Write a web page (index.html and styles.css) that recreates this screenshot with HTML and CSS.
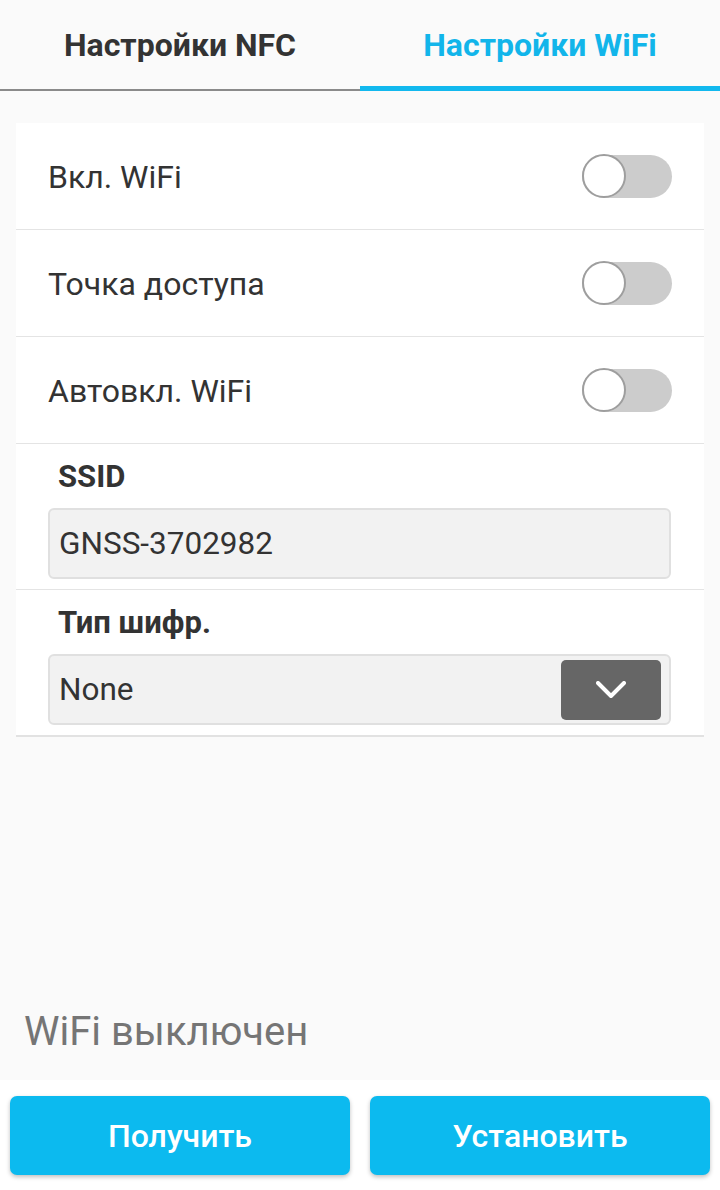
FILE: index.html
```html
<!DOCTYPE html>
<html lang="ru">
<head>
<meta charset="utf-8">
<link rel="stylesheet" href="styles.css">
</head>
<body>
<div class="app">
  <div class="tabs">
    <div class="tab">Настройки NFC</div>
    <div class="tab active">Настройки WiFi</div>
  </div>
  <div class="card">
    <div class="row">
      <span class="label">Вкл. WiFi</span>
      <span class="switch"><span class="knob"></span></span>
    </div>
    <div class="row">
      <span class="label">Точка доступа</span>
      <span class="switch"><span class="knob"></span></span>
    </div>
    <div class="row">
      <span class="label">Автовкл. WiFi</span>
      <span class="switch"><span class="knob"></span></span>
    </div>
    <div class="field">
      <div class="field-label">SSID</div>
      <div class="input">GNSS-3702982</div>
    </div>
    <div class="field">
      <div class="field-label">Тип шифр.</div>
      <div class="input select">
        <span>None</span>
        <span class="drop">
          <svg width="30" height="18" viewBox="0 0 30 18"><path d="M2 2 L15 15 L28 2" fill="none" stroke="#fff" stroke-width="4" stroke-linecap="round" stroke-linejoin="round"/></svg>
        </span>
      </div>
    </div>
  </div>
  <div class="spacer"></div>
  <div class="status">WiFi выключен</div>
  <div class="actions">
    <button class="btn">Получить</button>
    <button class="btn">Установить</button>
  </div>
</div>
</body>
</html>
```
FILE: styles.css
```css
html, body {
  margin: 0;
  padding: 0;
}
body {
  background: #fafafa;
  font-family: Roboto, "Noto Sans", sans-serif;
  color: #333;
}
.app {
  width: 720px;
  height: 1190px;
  display: flex;
  flex-direction: column;
}
.tabs {
  display: flex;
  height: 91px;
}
.tab {
  flex: 1;
  box-sizing: border-box;
  display: flex;
  align-items: center;
  justify-content: center;
  font-size: 32px;
  font-weight: 700;
  color: #333;
  border-bottom: 2px solid #8a8a8a;
}
.tab.active {
  color: #12b5ea;
  border-bottom: 5px solid #12b8ee;
  padding-top: 3px;
}
.card {
  margin: 32px 16px 0;
  background: #fff;
  border-bottom: 2px solid #e2e2e2;
}
.row {
  height: 106px;
  border-bottom: 1px solid #e4e4e4;
  display: flex;
  align-items: center;
  justify-content: space-between;
  padding: 0 32px;
}
.label {
  font-size: 32px;
  color: #333;
  padding-top: 2px;
}
.switch {
  width: 90px;
  height: 43px;
  border-radius: 22px;
  background: #cccccc;
  display: flex;
  align-items: center;
}
.knob {
  width: 40px;
  height: 40px;
  border-radius: 50%;
  background: #fff;
  border: 2px solid #9e9e9e;
  margin-left: -0.5px;
}
.field {
  padding: 14px 33px 10px 32px;
  border-bottom: 1px solid #e4e4e4;
}
.field:last-child {
  border-bottom: none;
}
.field-label {
  font-size: 31px;
  font-weight: 700;
  color: #333;
  padding-left: 10px;
  height: 36px;
  line-height: 38px;
  margin-bottom: 14px;
}
.input {
  box-sizing: border-box;
  height: 71px;
  background: #f2f2f2;
  border: 2px solid #e0e0e0;
  border-radius: 6px;
  display: flex;
  align-items: center;
  padding: 0 8px 0 9px;
  font-size: 31.5px;
  color: #333;
}
.select {
  justify-content: space-between;
}
.drop {
  width: 100px;
  height: 60px;
  background: #666666;
  border-radius: 5px;
  display: flex;
  align-items: center;
  justify-content: center;
}
.spacer {
  flex: 1;
}
.status {
  font-size: 40px;
  color: #757575;
  padding: 0 24px;
  height: 72px;
  line-height: 48px;
}
.actions {
  background: #fff;
  height: 110px;
  display: flex;
  gap: 20px;
  padding: 16px 10px 0;
  box-sizing: border-box;
}
.btn {
  flex: 1;
  height: 79px;
  background: #0cbaef;
  border: none;
  border-radius: 7px;
  color: #fff;
  font-family: Roboto, "Noto Sans", sans-serif;
  font-size: 32px;
  font-weight: 500;
  box-shadow: 0 2px 4px rgba(0,0,0,0.25);
}
```
